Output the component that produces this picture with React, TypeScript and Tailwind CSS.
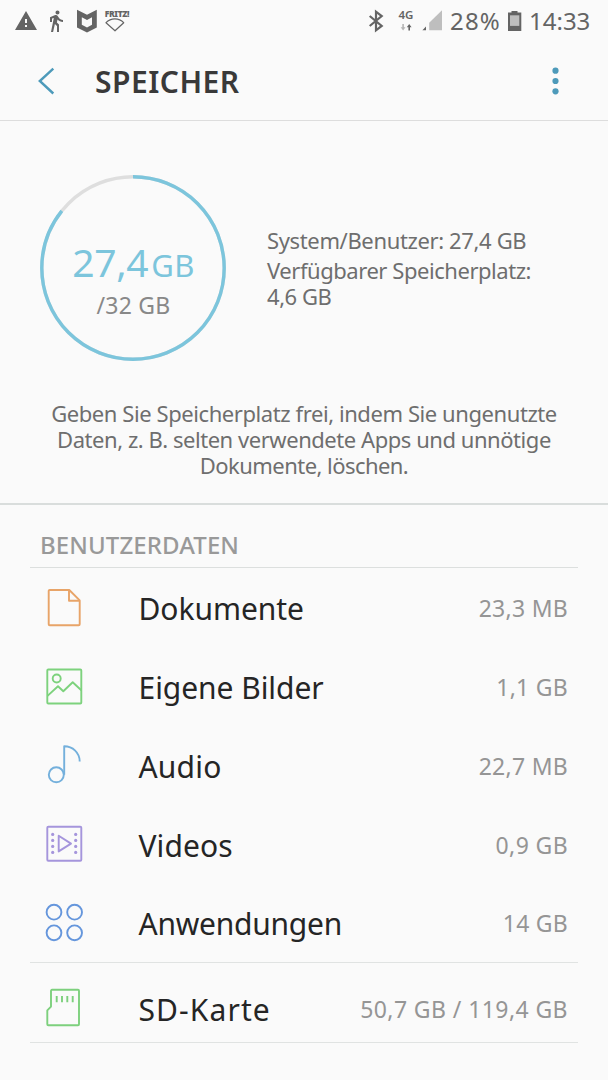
import type { ReactNode } from "react";
import { MdDirectionsWalk, MdWarning } from "react-icons/md";

const USED = 27.4;
const TOTAL = 32;

interface Row {
  label: string;
  value: string;
  labelClass: string;
  valueClass: string;
  icon: ReactNode;
}

function Icon({ color, children }: { color: string; children: ReactNode }) {
  return (
    <svg className={`w-10 h-10 shrink-0 ${color}`} viewBox="0 0 40 40" fill="none" stroke="currentColor" strokeWidth={1.9} strokeLinejoin="round">
      {children}
    </svg>
  );
}

const rows: Row[] = [
  {
    label: "Dokumente", value: "23,3 MB", labelClass: "tracking-[-0.05px]", valueClass: "tracking-[0.27px]",
    icon: (
      <Icon color="text-[#e8a468]">
        <path d="M25.3 2H5.7a1 1 0 0 0-1 1v33.3a1 1 0 0 0 1 1h29a1 1 0 0 0 1-1V12.4z" />
        <path d="M25 2.5v10.2h10.4" />
      </Icon>
    ),
  },
  {
    label: "Eigene Bilder", value: "1,1 GB", labelClass: "tracking-[-0.05px]", valueClass: "tracking-[0.26px]",
    icon: (
      <Icon color="text-[#7dd27d]">
        <rect x="3.3" y="2.5" width="34" height="34" rx="1" />
        <circle cx="12.7" cy="11.5" r="4" />
        <path d="M3.5 28.9L14 19.2l5.3 5 9.4-9 8.6 8" />
      </Icon>
    ),
  },
  {
    label: "Audio", value: "22,7 MB", labelClass: "tracking-[0.2px]", valueClass: "tracking-[0.27px]",
    icon: (
      <Icon color="text-[#74b0dc]">
        <circle cx="12.3" cy="29.8" r="7.5" />
        <path d="M20.2 29.8V1.3c8.6 0 15.5 6.6 15.5 15.2" />
      </Icon>
    ),
  },
  {
    label: "Videos", value: "0,9 GB", labelClass: "tracking-[0.1px]", valueClass: "tracking-[0.38px]",
    icon: (
      <Icon color="text-[#a595dc]">
        <rect x="3.3" y="2.7" width="34" height="34" rx="1" />
        <path d="M14.7 11.7L27 19.6l-12.3 7.8z" />
        {[10.4, 16.4, 22.4, 28.4].map((y) => (
          <g key={y} fill="currentColor" stroke="none">
            <circle cx="8.7" cy={y} r="1.6" />
            <circle cx="31.7" cy={y} r="1.6" />
          </g>
        ))}
      </Icon>
    ),
  },
  {
    label: "Anwendungen", value: "14 GB", labelClass: "tracking-[-0.25px]", valueClass: "tracking-[0.25px]",
    icon: (
      <Icon color="text-[#6596dc]">
        <circle cx="10" cy="9.2" r="7.4" />
        <circle cx="30.6" cy="9.2" r="7.4" />
        <circle cx="10" cy="29.8" r="7.4" />
        <circle cx="30.6" cy="29.8" r="7.4" />
      </Icon>
    ),
  },
];

const sdCard: Row = {
  label: "SD-Karte", value: "50,7 GB / 119,4 GB", labelClass: "tracking-[1.1px]", valueClass: "tracking-[0.42px]",
  icon: (
    <Icon color="text-[#7dd07d]">
      <path d="M8 1.8h26a1 1 0 0 1 1 1v33.5a1 1 0 0 1-1 1H4.3a1 1 0 0 1-1-1v-14L7 18.6V2.8a1 1 0 0 1 1-1z" />
      <path d="M12.7 7.9v6.4M18 7.9v6.4M23.3 7.9v6.4M28.7 7.9v6.4" />
    </Icon>
  ),
};

function ListRow({ row, className }: { row: Row; className: string }) {
  return (
    <div className={`flex items-center pl-[14px] pr-2.5 ${className}`}>
      {row.icon}
      <span className={`ml-[54.5px] pt-[3px] text-[30px] leading-10 text-[#252525] ${row.labelClass}`}>{row.label}</span>
      <span className={`ml-auto pt-px text-[23px] leading-8 text-[#959595] ${row.valueClass}`}>{row.value}</span>
    </div>
  );
}

function StatusBar() {
  return (
    <div className="flex items-center h-[41px] pl-[14px] text-[#646464]">
      <MdWarning className="w-6 h-6" />
      <MdDirectionsWalk className="w-6 h-6 ml-1.5" />
      <svg className="w-5 h-6 ml-[9px]" viewBox="0 0 20 24" fill="currentColor" fillRule="evenodd">
        <path d="M0 .8l10 5 9.8-5v17.7l-9.8 5-10-5zM4.8 8.2v7.6l5.2 2.7 5-2.7V8.2l-5 2.7z" />
      </svg>
      <div className="ml-2 w-6 h-6 flex flex-col items-center">
        <span className="text-[8.5px] leading-[9px] font-black tracking-[-0.4px]">FRITZ!</span>
        <svg className="w-5 h-[15px] shrink-0 -mt-px mr-1" viewBox="0 0 20 15" fill="none" stroke="currentColor" strokeWidth={1.2} strokeLinejoin="round">
          <path d="M1 5.7c4.8-5 13-5 17.7 0L10 13.8z" />
        </svg>
      </div>
      <svg className="w-[18px] h-6 ml-[238px]" viewBox="0 0 18 24" fill="none" stroke="currentColor" strokeWidth={2.2}>
        <path d="M2.7 7l12 10L9 21.300V2.700L14.700 7l-12 10" />
      </svg>
      <div className="ml-3 w-[18px] h-6 flex flex-col items-center">
        <span className="text-[11.5px] leading-3 font-semibold">4G</span>
        <svg className="w-[14px] h-[7px] mt-[3px]" viewBox="0 0 14 7">
          <path d="M3.3 0h1.6v3.2h1.6L4.1 6.5 1.7 3.2h1.6z" fill="#b5b5b5" />
          <path d="M9.4 6.5H11V3.2h1.6L10.2 0 7.8 3.2h1.6z" fill="currentColor" />
        </svg>
      </div>
      <svg className="w-5 h-[21px] ml-[7px]" viewBox="0 0 20 21">
        <path d="M.4 20.2L4 16.4v3.8z" fill="currentColor" />
        <path d="M7.2 20.2v-7.4L20 .3v19.9z" fill="#bebebe" />
      </svg>
      <span className="ml-2 w-[53px] text-2xl tracking-[1.2px]">28%</span>
      <svg className="w-[14px] h-5 ml-[5px]" viewBox="0 0 14 20">
        <path d="M3.5 0h6v1.6h3.8V20H0V1.6h3.5z" fill="currentColor" />
        <path d="M2 4.3h9.3v10.6H2z" fill="#bebebe" />
      </svg>
      <span className="ml-[7px] text-2xl">14:33</span>
    </div>
  );
}

function UsageRing() {
  const r = 91.2;
  const length = 2 * Math.PI * r;
  return (
    <div className="relative w-[186px] h-[186px] shrink-0">
      <svg className="w-full h-full -rotate-90" viewBox="0 0 186 186" fill="none" strokeWidth={3.4}>
        <circle cx="93" cy="93" r={r} stroke="#dedede" />
        <circle cx="93" cy="93" r={r} stroke="#7cc5dc" strokeDasharray={`${(length * USED) / TOTAL} ${length}`} />
      </svg>
      <div className="absolute inset-0 flex flex-col items-center pt-[66px] pl-px">
        <div className="flex items-baseline text-[#7cc5dc] leading-[42px]">
          <span className="text-[39px] tracking-[-0.3px]">27,4</span>
          <span className="text-[31px] ml-[3px] tracking-[0.4px]">GB</span>
        </div>
        <span className="text-[23px] leading-7 mt-[5px] text-[#888888] tracking-[0.28px]">/32 GB</span>
      </div>
    </div>
  );
}

export default function App() {
  return (
    <div className="w-full h-[1080px] overflow-hidden bg-[#fafafa] font-['Noto_Sans',sans-serif]">
      <StatusBar />

      <header className="flex items-center h-20 pl-[38px] pr-[49px] border-b border-[#dddddd]">
        <svg className="w-[17px] h-7 text-[#4d9aba]" viewBox="0 0 17 28" fill="none" stroke="currentColor" strokeWidth={2.4}>
          <path d="M15.3 1.7L1.8 14l13.5 12.5" />
        </svg>
        <h1 className="ml-10 pt-[3px] text-[30px] leading-10 font-semibold tracking-[0.5px] text-[#393939]">SPEICHER</h1>
        <svg className="w-[7px] h-7 ml-auto text-[#4d9aba]" viewBox="0 0 7 28" fill="currentColor">
          <circle cx="3.5" cy="3.7" r="3.1" />
          <circle cx="3.5" cy="14" r="3.1" />
          <circle cx="3.5" cy="24.3" r="3.1" />
        </svg>
      </header>

      <section className="h-[384px] pt-[54px] border-b-2 border-[#d9dddc] text-[22px] leading-[26px] text-[#6e6e6e]">
        <div className="flex items-center pl-10">
          <UsageRing />
          <div className="ml-[41px]">
            <p className="tracking-[-0.36px]">System/Benutzer: 27,4 GB</p>
            <p className="mt-1 tracking-[-0.45px]">Verfügbarer Speicherplatz:<br />4,6 GB</p>
          </div>
        </div>
        <p className="mt-[39px] text-center tracking-[-0.42px]">
          Geben Sie Speicherplatz frei, indem Sie ungenutzte<br />
          <span className="tracking-[-0.45px]">Daten, z. B. selten verwendete Apps und unnötige</span><br />
          <span className="tracking-[-0.55px]">Dokumente, löschen.</span>
        </p>
      </section>

      <section className="mx-[30px]">
        <h2 className="h-[63px] pt-6 pl-2.5 border-b border-[#dcdfde] text-2xl font-medium tracking-[0.1px] text-[#999999]">BENUTZERDATEN</h2>
        <div className="border-b border-[#e0e3e2]">
          {rows.map((row) => (
            <ListRow key={row.label} row={row} className="h-[78.75px] pt-px" />
          ))}
        </div>
        <ListRow row={sdCard} className="h-20 pt-3 border-b border-[#e0e3e2]" />
      </section>
    </div>
  );
}
